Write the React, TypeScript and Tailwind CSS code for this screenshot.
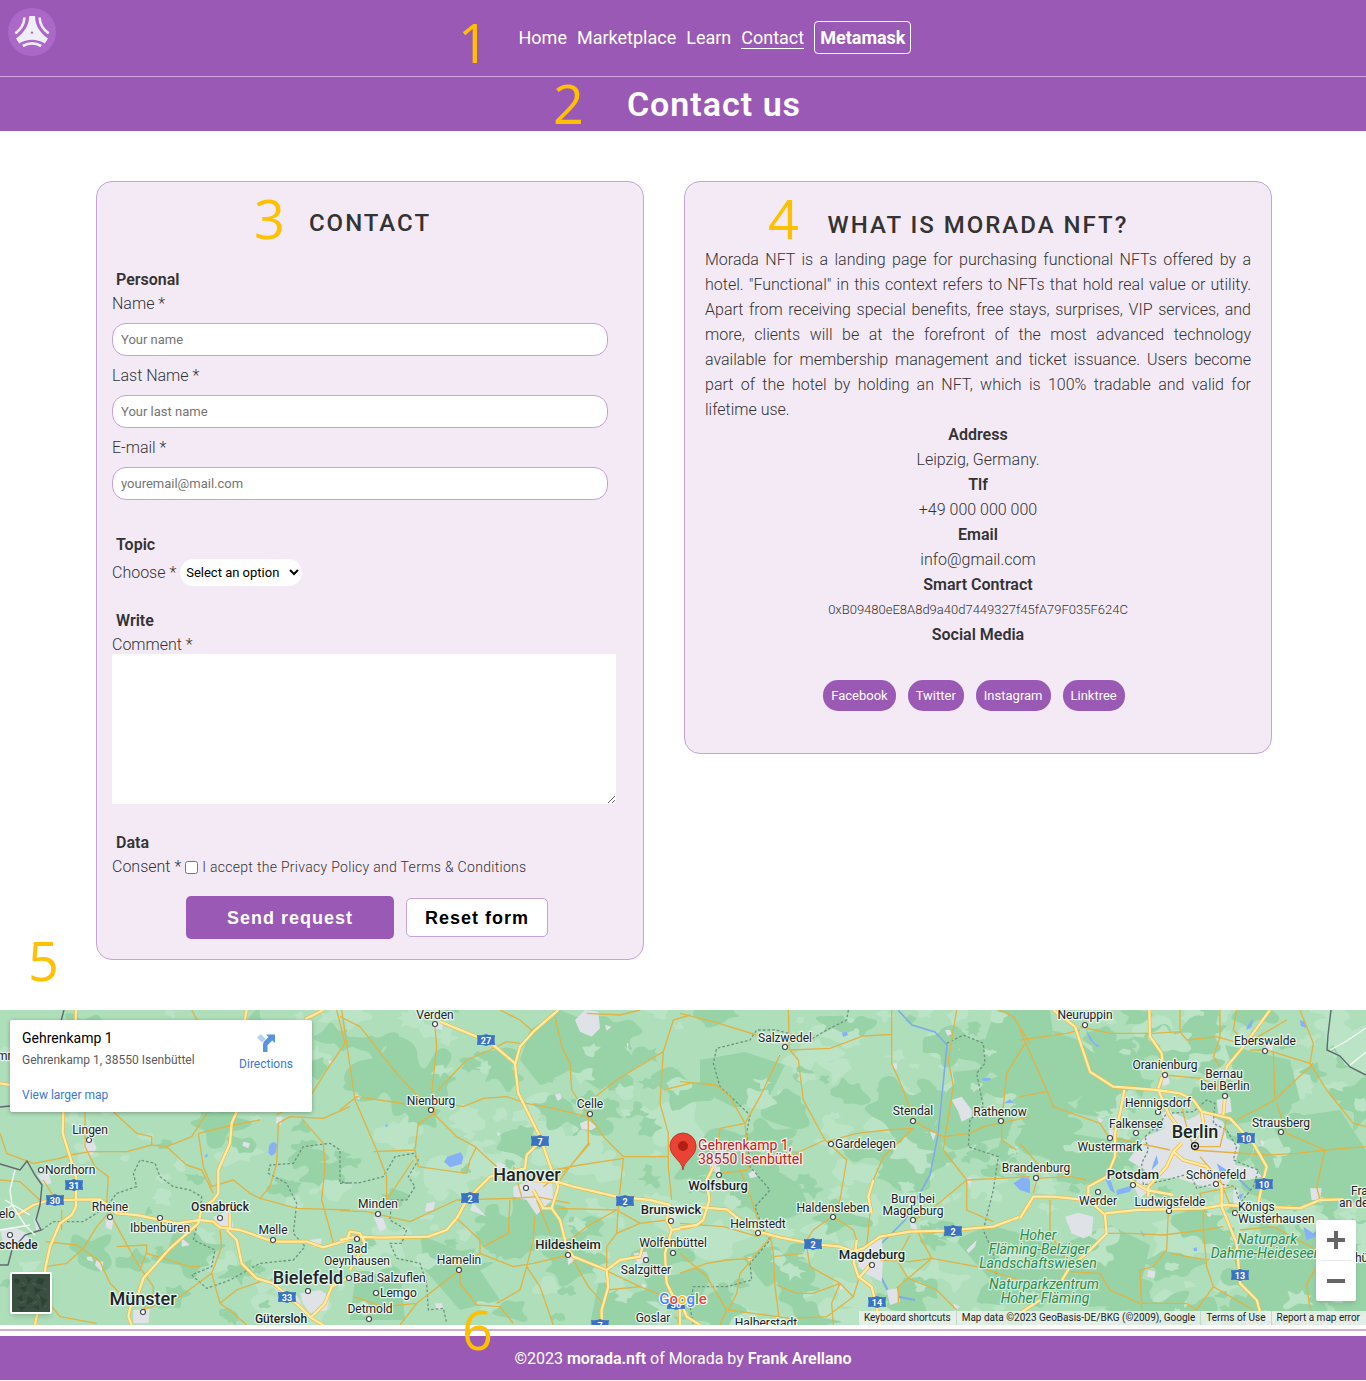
import type { ReactNode } from "react";

/* ---------- Map data (each sheet is a 350px wide strip drawn at 3x) ---------- */

type Sheet = { at: string; highways: string; roads: string; borders: string; towns: string; water: string };

const SHEETS: Sheet[] = [
  {
    at: "translate(0 -10) scale(0.33333)",
    highways:
      "M228 30L225 120L190 330L188 400L210 470L228 530L228 620L215 645L180 670L150 740L137 800L130 850L105 975M0 650L60 640L100 615L150 600L300 598L350 640L410 645L530 670L600 660L640 665L660 682L720 690L820 725L920 725L970 742L1050 718M740 30L725 110L710 335L695 370L690 430L655 510L655 580L640 600L605 625L595 670L510 745L430 835L415 880L390 925L385 950L395 975M680 690L710 720L725 790L770 835L820 850L900 920L935 955L970 975M970 30L915 58M690 640L690 690M935 950L975 910L995 860L1050 830M0 250L30 255",
    roads:
      "M0 400L20 460L100 490L180 475L210 465L270 455L380 455L455 435L500 440L575 410L620 340M340 335L410 400L455 410L455 435M500 440L560 495L605 510L640 580M255 335L255 440L285 500L325 530L320 610L335 650L400 770L425 810L460 860L460 880L430 930M595 400L610 500L635 560L700 540L750 580L780 595L890 625L1050 630M780 595L810 560L830 490L835 370L870 350L970 355L1050 320M780 360L700 375L595 400M575 30L640 150M1010 30L1035 130L980 210L930 290L830 345M905 355L970 430L975 500L965 600L990 690L1000 730M350 740L440 735L440 760L570 800L600 800M440 755L420 810M660 690L665 740L635 820L540 890L430 930M635 820L660 910L700 940L740 975M660 910L710 870L780 845M137 725L230 735L300 785L330 850L395 915M137 800L200 790L250 745L290 680L325 640M185 630L185 690M140 900L180 950L290 970M130 540L180 620M0 540L60 545L120 600",
    borders:
      "M125 690L160 665L250 665L320 620L350 580L410 560L400 520L420 480L465 490L480 530L520 560L570 570L605 590L600 640L580 720L645 750L635 800L575 825L620 865L690 840L780 790L880 780L915 740L880 700L890 610L860 550L805 520L810 495L880 490L910 440L990 430L1020 450L1020 545L1050 550",
    towns:
      "M250 420l25-10l15 35l-15 20l-22-15zM110 525l35-5l10 30l-20 5zM320 650l20 10l-5 30l-18-8zM640 650l50-20l10 50l-45 5zM900 880l60-10l30 20l-10 40l-50 10l-20-30zM820 860l40 20l30 5l20 40l-40-20zM0 690l40-10l40 20l10 30l-80 0zM290 780l20 5l-5 30l-20-20zM545 715l25 20l-25 5zM260 770l15 0l5 15l-18-5zM400 930l50-5l-5 45l-45 0zM730 425l20 5l-5 15l-18-8zM830 350l18 0l-5 25l-16-5zM930 720l35-5l-5 25l-20 0zM985 180l15 5l-10 15zM100 650l20 30l-10 15z",
    water: "M808 435l12-10l12 8l-5 25l-12 10l-10-10zM615 465l8-3v8l-6 3z",
  },
  {
    at: "translate(340 -10) scale(0.33333)",
    highways:
      "M300 65L410 110L460 135L525 190M655 30L580 95L540 140L525 195L535 280L600 410L640 525L655 560L635 625L660 660L680 740L700 770L800 810L805 860L785 930L785 975M0 720L50 710L120 713L265 710L320 690L350 655L375 610L410 570L450 530L555 505L560 465L600 425M560 540L650 545L700 560L830 590L930 600L990 615L980 660L995 690L975 760L980 850L1020 930L1020 975M800 810L840 780L900 770L910 730M995 690L1050 680M580 570L610 625L640 625M20 720L30 695L60 700L75 730L30 810",
    roads:
      "M0 50L60 80L170 220L290 350L350 410L405 440L470 500M5 30L45 300L110 450L140 530L140 600M285 75L290 140L275 280L285 340L235 370L225 450L235 500L380 520L390 480L410 440M0 330L50 290L220 315L290 305L370 320L430 295L500 290L560 310L640 325L740 350M290 275L380 180L450 150L500 125L540 130M645 50L665 140L690 190L695 270L745 345L745 430L690 500L660 540M760 295L830 240L970 155L1000 60L1050 45M970 155L960 310L985 400L985 500L995 600M750 350L790 410L850 470L985 470M640 510L720 495L850 475L835 620L830 700M970 270L1050 250M0 632L80 635L210 665L350 600L520 595L590 590L690 610M350 655L420 720L420 760L360 790L360 850L410 915L480 920L520 970M420 760L520 800L580 790L685 765M510 600L505 700L430 740M585 650L580 720L560 800L540 870L470 910M560 800L600 860L640 975M360 810L230 910L130 920L40 890M230 910L180 975M655 625L830 630L900 670M690 720L740 680L830 630M700 780L745 860L790 910M805 815L900 860L1000 900M800 870L900 860M830 700L900 670L980 660M100 455L225 450M140 600L220 480M800 740L800 810M830 700L800 740M480 30L540 60L580 95M740 40L840 45L900 30M610 560L690 500L750 430M520 500L545 590M590 600L630 700",
    borders:
      "M0 550L60 548L130 530L165 470L220 460L235 480L205 530L225 560L200 600L155 600L150 660L200 690L185 730L150 730L170 775L240 790L260 850L265 930L310 925L320 970",
    towns:
      "M705 60l30-30l40 5l5 50l-25 25l-35-15zM520 560l60-20l55 10l5 45l-50 50l-30-45l-40-10zM280 60l30 5l-5 25l-22-5zM720 370l25-10l25 20l-15 10l-30-2zM470 485l30 10l-30 20zM100 650l30 5l10 30l-20 10zM260 610l25-5l-5 25l-25 5zM680 760l25 20l-20 15zM880 760l40-5l5 20l-30 20zM985 640l25 0l-5 25l-20-5zM645 285l15-5l5 15l-12 8zM400 610l40 40l-50-20zM45 285l20 3l-8 12zM285 910l20 0l5 15l-20 5zM905 850l15 5l-10 15zM470 395l12 5l-8 10zM795 75l20 5l-15 12zM860 130l5 0l0 25zM1010 640l20-5l10 15z",
    water: "M312 485l10-15l40-13l8 15l-5 20l-35 10zM135 375l6-2l3 6l-5 2z",
  },
  {
    at: "translate(680 -10) scale(0.33333)",
    highways:
      "M100 500L80 540L88 600L70 660L50 675L0 683M65 622L140 628L180 660L235 695L300 712L400 732L480 740L520 755L550 745L600 710L690 695L800 692L940 680L1020 650L1050 615M530 720L522 790L535 830L575 860L590 920L600 975M540 830L575 790M580 540L565 590L575 640M0 900L20 950L60 975",
    roads:
      "M0 40L100 65L230 105M325 30L328 150L450 145L550 108L635 103M300 165L240 290L195 370L200 420L205 510M330 150L355 180L370 300L435 420L370 450L270 490M435 420L500 480L480 600L455 650L400 690L380 720M635 30L635 190L670 270L700 360L730 380L790 410L870 400L910 380L1050 350M700 385L620 390L530 400L440 425M700 385L610 470L580 540M830 30L805 180L820 260L800 380L790 450L860 540L860 630L940 665M860 540L1050 530M860 540L740 640L700 660M1035 130L980 220L965 370L965 420L1010 450M960 30L1000 50L1050 130M0 245L110 255L150 290L195 370L120 385L110 450M205 510L120 520M180 510L215 600L240 680M270 700L280 760L285 860L300 975M0 760L80 830L140 930L120 975M215 780L180 820L170 880L145 930L330 955L440 950L520 890M480 850L400 880L350 880L290 855M380 740L390 800L480 850L520 890L535 840M480 850L455 910L460 975M460 650L520 690L530 720M570 640L560 740M600 780L690 785L755 775L715 700M755 775L685 835L650 780M685 835L770 870L830 930M690 705L650 780M685 835L655 860L655 910M755 775L890 800L1050 850M0 670L130 680L235 710M140 780L215 775L270 715M0 820L80 790L140 780M280 770L370 760",
    borders:
      "M505 30L500 60L440 90L390 120L290 90L230 90L210 120L110 145L100 190L120 260L210 345L200 400L210 500L270 570L225 620L250 690L270 720L210 790L215 840L140 860L40 860L30 920L40 975M800 130L850 105L910 130L915 190L890 220L910 320L870 360L865 440L955 470L940 570L910 690L940 760L950 830",
    towns:
      "M815 300l30-10l30 40l0 20l-30 15l-10-30zM535 770l40-40l30-15l5 50l-5 80l-40-20l-30-25zM620 870l30-5l10 40l-30 10zM855 535l20 0l-5 25zM640 190l12 0l-2 20l-12-8zM205 520l20-10l5 20l-20 5zM90 490l20 5l-5 20l-15-5zM860 750l30-30l-5 20l-20 20zM205 770l15 0l-5 15l-12-5zM820 910l20 10l-15 15zM795 90l15 0l5 12l-12 5zM105 500l15 0l0 35l-12 0zM480 855l12 8l-12 8zM690 665l20 10l0 15l-18-5zM750 395l18 5l-8 22z",
    water: "M485 98l15-3l4 10l-14 6zM1000 550l30-20l20 10v40l-30-10zM905 235l25-2l3 8l-22 3zM970 310l20-12l15 15l-8-4z",
  },
  {
    at: "translate(1020 -10) scale(0.33333)",
    highways:
      "M100 30L165 80L195 170L210 215L280 260L410 270L480 280L520 300L545 335L630 355L700 430L740 500L725 560L715 610M388 30L390 110L425 160L430 220L415 265M750 30L670 140L620 200L615 240M313 270L300 340L285 400L285 470L260 530L205 560L205 600L255 645L260 700L200 760L150 800L120 850M0 655L40 590L100 590L200 600M255 640L350 630L550 625L610 615L720 620L840 625L900 600L970 598M605 555L605 620L650 730L660 850L710 900L720 935M330 540L380 570L460 585M385 590L385 560L440 500L460 455L485 430M460 455L490 480L560 500L605 560M415 270L445 340L480 390M545 335L550 370L535 400M615 290L610 345M0 940L60 900",
    roads:
      "M0 90L80 270L100 320L240 370L265 410L380 435L450 450M0 120L140 100L180 90M180 80L270 100L400 100L480 95L500 120L590 110L660 130M480 30L480 95M600 30L600 110L580 170L600 200M690 150L740 150L870 190L920 270L1000 370L1038 380M760 160L765 300L880 190M765 300L650 360M520 450L740 465L830 460L915 450L1038 440M915 450L890 560L900 600M915 450L800 400L770 310M435 225L540 235L600 260M45 535L150 530L200 540M445 635L440 750L400 800L360 810L365 930M260 700L330 700L430 705L550 690L610 680M550 625L550 690L560 800L580 860L530 930M580 860L700 930M365 910L500 910L530 930M150 815L240 820L270 870L360 910M90 600L90 700L150 800M520 450L520 430L560 380M540 470L600 540L640 640M640 560L540 580L560 650M660 690L760 680L890 750M870 930L860 850L890 800M480 300L500 380L520 440L600 440L620 360M650 30L640 90L680 130L800 60M870 190L880 130L840 30M0 290L80 275M0 430L60 500L40 580M650 740L560 780L450 760",
    borders:
      "M375 410L420 370L440 340L520 335L560 300L585 310L580 370L620 390L650 440L640 480L715 510L700 560L660 610L645 560L590 550L530 565L510 520L440 540L370 555L365 490L385 450z",
    towns:
      "M375 410l60-25l-10-45l20-10l60 30l45-25l60 30l10 50l40 20l-15 60l60 10l20 25l-40 10l-50-10l-20 40l-80-15l-60-20l-70 0l-20 30l-50-5l40-50l-50-30zM135 650l40-12l45 12l-5 55l-25 10l-35-15zM590 300l40-10l5 45l-40 10zM640 570l15-5l5 60l-20-15zM870 565l35 0l-5 35l-25 0zM385 810l22 5l-5 20l-20-5zM340 560l25-10l25 20l-30 25zM265 390l25 0l0 30l-20-5zM425 230l20 0l5 20l-22 10zM740 130l20 5l-5 20l-20-5zM185 65l20 0l-5 20zM230 350l20 10l-10 10zM550 640l25 0l-5 12zM720 420l15 5l-8 15zM480 600l35 10l-25 15z",
    water:
      "M0 550l25-20l5 30l-25 5zM195 75l10 25l20 30l15 8l-8 4l-25-25zM400 490l10-25l5 25l-20 20zM265 520l20 60l-15-10l-15-35zM290 570l50-15l-10 20l-40 10zM365 360l10 5l-5 15zM680 80l20-25l-5 25l-15 10zM840 60l15 5l5 20l-18-8zM850 680l30 20l25-25l-20 35l-25 10zM590 490l30 20l5 15l-25-8zM360 690l15 15l-5 5zM520 745l10-3l2 10l-10 2zM655 585l15-5l-8 20z",
  },
];

/* Seeded generator so that the vegetation patches are the same on every render */
function patches(seed: number, count: number, eastBias: number, size: number) {
  let s = seed;
  const rnd = () => {
    s = (s * 16807) % 2147483647;
    return s / 2147483647;
  };
  let d = "";
  for (let i = 0; i < count; i++) {
    const cx = Math.pow(rnd(), eastBias) * 1366;
    const cy = rnd() * 315;
    const r = 4 + rnd() * rnd() * size;
    const n = 14;
    const pts: [number, number][] = [];
    for (let k = 0; k < n; k++) {
      const a = (k / n) * Math.PI * 2;
      const q = r * (0.3 + rnd() * 1.1);
      pts.push([cx + Math.cos(a) * q * 1.3, cy + Math.sin(a) * q * 0.9]);
    }
    const mid = (k: number) => {
      const [ax, ay] = pts[k % n];
      const [bx, by] = pts[(k + 1) % n];
      return ((ax + bx) / 2).toFixed(1) + " " + ((ay + by) / 2).toFixed(1);
    };
    d += "M" + mid(0);
    for (let k = 1; k <= n; k++) {
      const [x, y] = pts[k % n];
      d += "Q" + x.toFixed(1) + " " + y.toFixed(1) + " " + mid(k);
    }
    d += "Z";
  }
  return d;
}

const LIGHT = patches(77, 170, 0.65, 34);
const DARK = patches(4211, 270, 0.6, 34);
const LIGHT_TOP = patches(991, 120, 0.6, 14);

type Place = { t: string; x: number; y: number; s?: number; w?: number; a?: "start" | "end"; d?: [number, number] };

const PLACES: Place[] = [
  { t: "Lingen", x: 90, y: 124, d: [89, 130] },
  { t: "Nordhorn", x: 45, y: 164, a: "start", d: [41, 160] },
  { t: "Rheine", x: 110, y: 201, d: [110, 207] },
  { t: "Ibbenbüren", x: 160, y: 222, d: [160, 208] },
  { t: "Osnabrück", x: 220, y: 201, w: 500, d: [220, 208] },
  { t: "Melle", x: 273, y: 224, d: [273, 230] },
  { t: "elo", x: -1, y: 208, a: "start" },
  { t: "mm", x: -3, y: 50, a: "start" },
  { t: "schede", x: -1, y: 239, a: "start", w: 500, d: [10, 225] },
  { t: "Münster", x: 143, y: 295, s: 18, w: 500, d: [143, 302] },
  { t: "Bielefeld", x: 308, y: 274, s: 18, w: 500, d: [308, 281] },
  { t: "Gütersloh", x: 281, y: 313, w: 500 },
  { t: "Verden", x: 435, y: 9, d: [435, 14] },
  { t: "Nienburg", x: 431, y: 95, d: [431, 100] },
  { t: "Celle", x: 590, y: 98, d: [590, 104] },
  { t: "Hanover", x: 527, y: 171, s: 18, w: 500, d: [526, 178] },
  { t: "Minden", x: 378, y: 198, d: [378, 204] },
  { t: "Bad", x: 357, y: 243, d: [357, 229] },
  { t: "Oeynhausen", x: 357, y: 255 },
  { t: "Bad Salzuflen", x: 353, y: 272, a: "start", d: [349, 268] },
  { t: "Lemgo", x: 380, y: 287, a: "start", d: [376, 283] },
  { t: "Detmold", x: 370, y: 303, d: [369, 309] },
  { t: "Hamelin", x: 459, y: 254, d: [459, 260] },
  { t: "Hildesheim", x: 568, y: 239, w: 500, s: 13, d: [568, 245] },
  { t: "Brunswick", x: 671, y: 204, w: 500, s: 13, d: [671, 211] },
  { t: "Wolfenbüttel", x: 673, y: 237, d: [673, 243] },
  { t: "Salzgitter", x: 646, y: 264, d: [646, 250] },
  { t: "Goslar", x: 653, y: 312 },
  { t: "Wolfsburg", x: 718, y: 180, w: 500, s: 13, d: [719, 165] },
  { t: "Salzwedel", x: 785, y: 32, d: [785, 37] },
  { t: "Gardelegen", x: 835, y: 138, a: "start", d: [831, 134] },
  { t: "Stendal", x: 913, y: 105, d: [913, 111] },
  { t: "Rathenow", x: 1000, y: 106, d: [1001, 111] },
  { t: "Haldensleben", x: 833, y: 202, d: [833, 207] },
  { t: "Helmstedt", x: 758, y: 218, d: [758, 223] },
  { t: "Burg bei", x: 913, y: 193 },
  { t: "Magdeburg", x: 913, y: 205, d: [913, 210] },
  { t: "Magdeburg", x: 872, y: 249, w: 500, s: 13, d: [872, 255] },
  { t: "Halberstadt", x: 766, y: 317 },
  { t: "Neuruppin", x: 1085, y: 9, d: [1085, 15] },
  { t: "Eberswalde", x: 1265, y: 35, d: [1265, 41] },
  { t: "Oranienburg", x: 1165, y: 59, d: [1165, 65] },
  { t: "Bernau", x: 1224, y: 68 },
  { t: "bei Berlin", x: 1225, y: 80, d: [1225, 86] },
  { t: "Hennigsdorf", x: 1158, y: 97, d: [1158, 102] },
  { t: "Falkensee", x: 1136, y: 118, d: [1136, 123] },
  { t: "Berlin", x: 1195, y: 128, s: 18, w: 500 },
  { t: "Strausberg", x: 1281, y: 117, d: [1281, 122] },
  { t: "Wustermark", x: 1110, y: 141, d: [1110, 128] },
  { t: "Brandenburg", x: 1036, y: 162, d: [1036, 168] },
  { t: "Potsdam", x: 1133, y: 169, w: 500, s: 13, d: [1133, 175] },
  { t: "Schönefeld", x: 1216, y: 169, d: [1216, 174] },
  { t: "Werder", x: 1098, y: 195, d: [1098, 182] },
  { t: "Ludwigsfelde", x: 1170, y: 196, d: [1169, 201] },
  { t: "Königs", x: 1238, y: 201, a: "start", d: [1235, 203] },
  { t: "Wusterhausen", x: 1238, y: 213, a: "start" },
  { t: "Fra", x: 1351, y: 185, a: "start" },
  { t: "an de", x: 1339, y: 197, a: "start" },
  { t: "hü", x: 1355, y: 252, a: "start" },
];

const PARKS: [string, number, number][] = [
  ["Hoher", 1038, 230],
  ["Fläming-Belziger", 1039, 244],
  ["Landschaftswiesen", 1038, 258],
  ["Naturparkzentrum", 1044, 279],
  ["Hoher Fläming", 1045, 293],
  ["Naturpark", 1267, 234],
  ["Dahme-Heideseen", 1266, 248],
];

const SHIELDS: [string, number, number][] = [
  ["27", 486, 30], ["7", 540, 131], ["2", 470, 188], ["2", 625, 191], ["31", 74, 175], ["30", 55, 190],
  ["33", 287, 287], ["36", 676, 294], ["7", 600, 315], ["2", 813, 234], ["2", 953, 221], ["14", 877, 292],
  ["10", 1246, 128], ["10", 1264, 174], ["13", 1240, 265],
];

function MapDrawing() {
  return (
    <svg
      viewBox="0 0 1366 315"
      preserveAspectRatio="xMidYMid slice"
      className="block h-full w-full"
      role="img"
      aria-label="Map of northern Germany"
      fontFamily="Roboto, 'Liberation Sans', sans-serif"
    >
      <rect width="1366" height="315" fill="#aedeba" />
      <path d={LIGHT} fill="#bbe4c6" />
      <path
        fill="#97d3a7"
        d="M560 0L610 20L640 55L600 80L570 60L540 75L520 50L530 20ZM700 50L745 42L785 55L770 85L735 98L700 80ZM740 165L760 150L800 175L810 200L770 215L745 195ZM995 0H1050L1060 80L1075 130L1030 120L1010 95L1000 60L985 30ZM1225 35L1290 50L1300 90L1260 110L1240 80ZM955 230L990 215L1060 235L1110 215L1150 235L1135 300L1060 290L1000 280ZM1230 235L1330 220L1366 235V290L1290 295L1240 270ZM1050 120L1110 130L1125 160L1085 175L1050 160ZM420 225L470 245L500 290L460 300L425 260ZM360 230L400 260L405 310H350ZM600 265L660 300L640 315H590ZM1270 110L1340 100L1366 140V190L1300 170Z"
      />
      <path d={DARK} fill="#97d3a7" />
      <path d={LIGHT_TOP} fill="#bbe4c6" />
      <path d="M1330 30L1366 15V65L1345 55Z" fill="#bbe4c6" />
      <g fill="none" stroke="#7fabe8" strokeWidth="2">
        <path d="M898 0L912 15L935 22L947 35L943 75L938 125L930 165L905 210L880 235" strokeWidth="1.6" />
        <path d="M875 255L890 285L915 290M1035 160L1060 155M1133 175L1145 160L1160 135L1156 115M1250 180L1235 165L1220 150" />
      </g>
      {SHEETS.map((s) => (
        <g key={s.at} transform={s.at} fill="none" strokeLinejoin="round">
          <path d={s.towns} fill="#dfe3e7" />
          <path d={s.water} fill="#87b1f7" />
          <path d={s.borders} stroke="#6f9580" strokeWidth="4" strokeDasharray="8 6" />
          <path d={s.roads} stroke="#e0b345" strokeWidth="4" />
          <path d={s.highways} stroke="#efb944" strokeWidth="11" />
          <path d={s.highways} stroke="#fdeba6" strokeWidth="7" />
        </g>
      ))}
      <g fill="none" strokeWidth="1.4">
        <path d="M0 154L20 160L27 151L35 165L42 175L40 195L36 210L41 220L25 225L12 240L8 255H0M64 0L60 15M0 97L10 96M1331 0L1328 25L1327 40L1340 46L1350 57L1366 65" stroke="#5c6b70" />
        <path d="M0 205L12 195L10 180L15 160M12 195L25 215L35 225M0 220L30 215M5 190L30 205M1366 18L1345 32L1330 40M1366 42L1350 55" stroke="#f4f8f5" />
      </g>
      {SHIELDS.map(([n, x, y]) => (
        <g key={n + x}>
          <path d={`M${x - 9} ${y - 5}q5 1 9-1q4 2 9 1q-1 5 0 10q-5-1-9 1q-4-2-9-1q1-5 0-10z`} fill="#3a72c4" />
          <text x={x} y={y + 4} fontSize="9" fontWeight="700" textAnchor="middle" fill="#fff">
            {n}
          </text>
        </g>
      ))}
      {PLACES.map((p) => (
        <g key={p.t + p.x}>
          {p.d && <circle cx={p.d[0]} cy={p.d[1]} r="2.5" fill="#fff" stroke="#3c4043" strokeWidth="1.1" />}
          <text
            x={p.x}
            y={p.y}
            fontSize={p.s ?? 12}
            fontWeight={p.w ?? 400}
            textAnchor={p.a ?? "middle"}
            fill="#202427"
            stroke="#e9f6ec"
            strokeWidth="2.4"
            strokeLinejoin="round"
            paintOrder="stroke"
          >
            {p.t}
          </text>
        </g>
      ))}
      <circle cx="1195" cy="136" r="3.4" fill="#fff" stroke="#111" strokeWidth="1.4" />
      <circle cx="1195" cy="136" r="1.6" fill="#111" />
      <g fontSize="14" fontStyle="italic" textAnchor="middle" fill="#2f8a4f" stroke="#d4eedb" strokeWidth="2.4" paintOrder="stroke">
        {PARKS.map(([t, x, y]) => (
          <text key={t} x={x} y={y}>
            {t}
          </text>
        ))}
        <text x="1298" y="319" fill="#8fae97">
          Biosphärenreservat
        </text>
      </g>
      <g fontSize="14" fill="#b3261e" stroke="#fbeeee" strokeWidth="2.4" paintOrder="stroke">
        <text x="698" y="140">Gehrenkamp 1,</text>
        <text x="698" y="154">38550 Isenbüttel</text>
      </g>
      <path d="M683 160C682 150 670 147 670 136a13 13 0 0 1 26 0C696 147 684 150 683 160Z" fill="#ea4335" stroke="#b8281e" strokeWidth="0.8" />
      <circle cx="683" cy="136" r="5" fill="#b11f15" />
      <text x="683" y="294" fontSize="15" fontWeight="500" textAnchor="middle" stroke="#fff" strokeWidth="2" paintOrder="stroke">
        <tspan fill="#4285f4">G</tspan>
        <tspan fill="#ea4335">o</tspan>
        <tspan fill="#fbbc05">o</tspan>
        <tspan fill="#4285f4">g</tspan>
        <tspan fill="#34a853">l</tspan>
        <tspan fill="#ea4335">e</tspan>
      </text>
    </svg>
  );
}

function Logo() {
  return (
    <svg viewBox="0 0 48 48" className="size-12" aria-hidden="true">
      <circle cx="24" cy="24" r="24" fill="#ab68c8" />
      <path
        d="M21.200 8h5.800c0 9 4.500 16.500 13 22.500l-3.200 5c-8-5-17.600-5-25.600 0L8 30.500C16.500 24.500 21.200 17 21.200 8Z"
        fill="#f1eefb"
      />
      <path d="M24 23l1.600 2.600h-3.200z" fill="#9b59b6" />
      <g fill="none" stroke="#f1eefb" strokeWidth="2.600">
        <path d="M16.500 9.500C16 17 13 21.500 7.300 25.300" />
        <path d="M31.500 9.500C32 17 35 21.500 40.700 25.300" />
        <path d="M14.800 38C20.500 34.800 27.500 34.800 33.200 38" />
      </g>
    </svg>
  );
}

/* ---------- Page parts ---------- */

function Marker({ className, children }: { className: string; children: ReactNode }) {
  return (
    <span
      className={`pointer-events-none absolute z-10 font-['Open_Sans','Noto_Sans',sans-serif] text-[54px] leading-[54px] font-normal text-[#ffc000] ${className}`}
    >
      {children}
    </span>
  );
}

function Legend({ children }: { children: ReactNode }) {
  return <h3 className="pl-1 leading-6 font-semibold">{children}</h3>;
}

function TextField({ id, label, type, placeholder }: { id: string; label: string; type: string; placeholder: string }) {
  return (
    <div>
      <label htmlFor={id} className="block leading-6">
        {label}
      </label>
      <div className="pt-[7px] pr-5 pb-2">
        <input
          id={id}
          type={type}
          placeholder={placeholder}
          className="block h-[33px] w-full rounded-[14px] border border-[#c3a4d5] bg-white px-2 text-[13px] font-normal placeholder:text-[#757575]"
        />
      </div>
    </div>
  );
}

const NAV = ["Home", "Marketplace", "Learn"];
const SOCIAL = ["Facebook", "Twitter", "Instagram", "Linktree"];
const FACTS: [string, string][] = [
  ["Address", "Leipzig, Germany."],
  ["Tlf", "+49 000 000 000"],
  ["Email", "info@gmail.com"],
];

export default function App() {
  return (
    <div className="bg-white font-[Roboto,'Liberation_Sans',sans-serif] text-base font-[350] text-[#333]">
      <header className="bg-[#9b59b6] text-white">
        <div className="relative flex h-[77px] items-start border-b border-[#d2a5e3] px-2 pt-2">
          <a href="#home" aria-label="Morada home" className="shrink-0">
            <Logo />
          </a>
          <nav className="mt-[13px] flex flex-1 items-center justify-center gap-2.5 pl-4 text-lg font-normal">
            {NAV.map((n) => (
              <a key={n} href="#nav" className="leading-[21px]">
                {n}
              </a>
            ))}
            <a href="#contact" className="border-b border-white leading-[21px]">
              Contact
            </a>
            <button type="button" className="h-[33px] rounded border border-white px-[5px] font-bold">
              Metamask
            </button>
          </nav>
          <Marker className="top-[15px] left-[458px]">1</Marker>
        </div>
        <div className="relative flex h-[54px] items-center justify-center pl-[62px]">
          <h1 className="text-[34px] leading-none font-semibold tracking-[1px]">Contact us</h1>
          <Marker className="-top-px left-[553px]">2</Marker>
        </div>
      </header>

      <main>
        <div className="relative grid grid-cols-[548fr_588fr] items-start gap-10 py-[50px] pr-[94px] pl-24">
          <section className="relative rounded-2xl border border-[#c3a4d5] bg-[#f3eaf6] px-[15px] pt-[26px] pb-5">
            <Marker className="top-[9px] left-[157px]">3</Marker>
            <h2 className="text-center text-2xl leading-[30px] font-medium tracking-[2px]">CONTACT</h2>
            <form className="mt-[30px]">
              <Legend>Personal</Legend>
              <TextField id="name" label="Name *" type="text" placeholder="Your name" />
              <TextField id="last" label="Last Name *" type="text" placeholder="Your last name" />
              <TextField id="mail" label="E-mail *" type="email" placeholder="youremail@mail.com" />

              <div className="mt-[25px]">
                <Legend>Topic</Legend>
                <div className="mt-0.5 flex h-[27px] items-center gap-1">
                  <label htmlFor="topic">Choose *</label>
                  <select id="topic" className="h-[27px] w-[122px] rounded-[14px] bg-white pl-[2px] text-[13px] font-normal text-black">
                    <option>Select an option</option>
                  </select>
                </div>
              </div>

              <div className="mt-[23px] pr-3">
                <Legend>Write</Legend>
                <label htmlFor="comment" className="block h-[21px] leading-6">
                  Comment *
                </label>
                <textarea id="comment" className="block h-[150px] w-full bg-white" />
              </div>

              <div className="mt-[27px]">
                <Legend>Data</Legend>
                <div className="flex h-6 items-center">
                  <span className="mr-1">Consent *</span>
                  <input id="consent" type="checkbox" className="mr-1 size-[13px]" />
                  <label htmlFor="consent" className="text-sm tracking-[0.3px]">
                    I accept the Privacy Policy and Terms &amp; Conditions
                  </label>
                </div>
              </div>

              <div className="mt-[17px] flex items-center justify-center gap-3 pr-1.5 font-['Liberation_Sans',sans-serif] text-lg font-bold tracking-[1px]">
                <button type="submit" className="h-[43px] w-[208px] rounded-[5px] bg-[#9b59b6] text-white">
                  Send request
                </button>
                <button type="reset" className="h-[39px] w-[142px] rounded-[5px] border border-[#c3a4d5] bg-white text-black">
                  Reset form
                </button>
              </div>
            </form>
          </section>

          <section className="relative rounded-2xl border border-[#c3a4d5] bg-[#f3eaf6] px-5 pt-7 pb-[42px] leading-[25px]">
            <Marker className="top-[9px] left-[83px]">4</Marker>
            <h2 className="mb-[7px] text-center text-2xl leading-[30px] font-medium tracking-[2px]">WHAT IS MORADA NFT?</h2>
            <p className="text-justify">
              Morada NFT is a landing page for purchasing functional NFTs offered by a hotel. "Functional" in this context
              refers to NFTs that hold real value or utility. Apart from receiving special benefits, free stays, surprises,
              VIP services, and more, clients will be at the forefront of the most advanced technology available for
              membership management and ticket issuance. Users become part of the hotel by holding an NFT, which is 100%
              tradable and valid for lifetime use.
            </p>
            <div className="text-center">
              {FACTS.map(([k, v]) => (
                <div key={k}>
                  <h3 className="font-semibold">{k}</h3>
                  <p>{v}</p>
                </div>
              ))}
              <h3 className="font-semibold">Smart Contract</h3>
              <p className="text-[13px] leading-[25px]">0xB09480eE8A8d9a40d7449327f45fA79F035F624C</p>
              <h3 className="font-semibold">Social Media</h3>
            </div>
            <div className="mt-[33px] flex justify-center gap-3 pr-2">
              {SOCIAL.map((s) => (
                <a key={s} href="#social" className="rounded-[15px] bg-[#9b59b6] px-2 text-[13px] leading-[31px] font-normal text-white">
                  {s}
                </a>
              ))}
            </div>
          </section>
          <Marker className="bottom-[23px] left-[28px]">5</Marker>
        </div>

        <section className="relative h-[315px] overflow-hidden font-normal" aria-label="Location">
          <MapDrawing />
          <div className="absolute top-2.5 left-2.5 flex h-[92px] w-[302px] justify-between rounded-xs bg-white px-3 pt-2.5 text-xs shadow-[0_1px_4px_rgba(0,0,0,0.3)]">
            <div>
              <h3 className="text-sm leading-4 text-black">Gehrenkamp 1</h3>
              <p className="mt-1.5 leading-4 text-[#5b5b5b]">Gehrenkamp 1, 38550 Isenbüttel</p>
              <a href="#larger" className="mt-[19px] block leading-4 text-[#3a78d8]">
                View larger map
              </a>
            </div>
            <a href="#directions" className="mr-[7px] flex flex-col items-center text-[#3a78d8]">
              <svg viewBox="0 0 20 20" className="mt-[3px] size-5" aria-hidden="true">
                <path d="M1 4.500l4-3.500l4.500 5l-3.500 3.500z" fill="#b3d1f3" />
                <path d="M7 19v-7.500q0-2 1.500-3.500l4-4l-2.500-2.500h9v8.500l-2.700-2.500l-4.800 4.700v6.800z" fill="#5794dd" />
              </svg>
              <span className="mt-[3px] leading-4">Directions</span>
            </a>
          </div>
          <button
            type="button"
            aria-label="Show satellite imagery"
            className="absolute bottom-[11px] left-2.5 size-[42px] overflow-hidden rounded-xs border-2 border-white bg-[#35493b] shadow-md"
          >
            <svg viewBox="0 0 38 38" className="size-full" aria-hidden="true">
              <path d="M0 0h38v38H0z" fill="#3a4f40" />
              <path d="M3 4l5 2l-2 4l-4-1zM14 2l6 3l-4 5zM26 4l7 1l-3 6l-6-2zM8 14l7-2l-2 6zM22 13l8 3l-7 4zM4 24l6-3l1 7zM16 22l6 4l-7 5zM28 22l7 4l-5 7zM6 32l8 1l-5 4zM20 33l7-2v5z" fill="#2d4234" />
              <path d="M10 8l3 3M20 9l4 2M31 14l4 2M13 20l4-2M25 21l3 3M8 29l5-2M21 30l4-3M32 34l3-3" stroke="#4d6454" />
            </svg>
          </button>
          <div className="absolute right-2.5 bottom-6 flex w-10 flex-col rounded-xs bg-white text-[#666] shadow-md">
            <button type="button" aria-label="Zoom in" className="flex h-10 items-center justify-center">
              <svg viewBox="0 0 18 18" className="size-[18px]" aria-hidden="true">
                <path d="M7 0h4v7h7v4h-7v7H7v-7H0V7h7z" fill="currentColor" />
              </svg>
            </button>
            <span className="mx-[5px] h-px bg-[#e6e6e6]" />
            <button type="button" aria-label="Zoom out" className="flex h-10 items-center justify-center">
              <svg viewBox="0 0 18 18" className="size-[18px]" aria-hidden="true">
                <path d="M0 7h18v4H0z" fill="currentColor" />
              </svg>
            </button>
          </div>
          <div className="absolute right-0 bottom-0 flex h-3.5 items-center divide-x divide-[#c5d6ca] bg-[#f5f5f5]/75 pr-px text-[10px] leading-[14px] text-[#222]">
            <button type="button" className="px-[5px]">
              Keyboard shortcuts
            </button>
            <span className="px-[5px]">Map data ©2023 GeoBasis-DE/BKG (©2009), Google</span>
            <a href="#terms" className="px-[5px]">
              Terms of Use
            </a>
            <a href="#report" className="px-[5px]">
              Report a map error
            </a>
          </div>
        </section>
      </main>

      <div className="relative pt-1 pb-[5px]">
        <div className="h-0.5 bg-[#c6afd9]" />
        <Marker className="-top-[23px] left-[462px]">6</Marker>
      </div>
      <footer className="mb-px flex h-11 items-center justify-center bg-[#9b59b6] pt-0.5 font-normal text-white">
        <p>
          ©2023 <strong className="font-semibold">morada.nft</strong> of Morada by{" "}
          <strong className="font-semibold">Frank Arellano</strong>
        </p>
      </footer>
    </div>
  );
}
